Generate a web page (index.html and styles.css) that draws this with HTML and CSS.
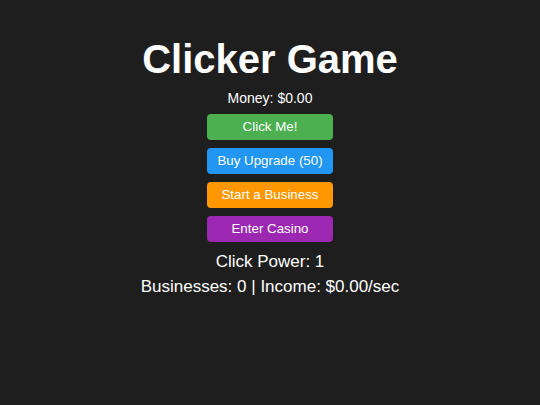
FILE: index.html
```html
<!DOCTYPE html>
<html>
<head>
<meta charset="utf-8">
<title>Clicker Game</title>
<link rel="stylesheet" href="styles.css">
</head>
<body>
<main class="game">
  <h1 class="title">Clicker Game</h1>
  <div class="money">Money: $0.00</div>
  <div class="actions">
    <button class="btn btn-click">Click Me!</button>
    <button class="btn btn-upgrade">Buy Upgrade (50)</button>
    <button class="btn btn-business">Start a Business</button>
    <button class="btn btn-casino">Enter Casino</button>
  </div>
  <div class="stats">
    <div class="stat">Click Power: 1</div>
    <div class="stat">Businesses: 0 | Income: $0.00/sec</div>
  </div>
</main>
</body>
</html>
```

FILE: styles.css
```css
html, body {
  margin: 0;
  padding: 0;
  background: #1e1e1e;
  color: #ffffff;
  font-family: "Liberation Sans", Arial, sans-serif;
}
.game {
  display: flex;
  flex-direction: column;
  align-items: center;
  padding-top: 36px;
}
.title {
  margin: 0;
  font-size: 40px;
  line-height: 46px;
  font-weight: bold;
}
.money {
  margin-top: 8px;
  font-size: 14px;
  line-height: 16px;
}
.actions {
  margin-top: 8px;
  display: flex;
  flex-direction: column;
  gap: 8px;
}
.btn {
  width: 126px;
  height: 26px;
  margin: 0;
  padding: 0;
  border: none;
  border-radius: 4px;
  color: #ffffff;
  font-family: "Liberation Sans", Arial, sans-serif;
  font-size: 13.333px;
  line-height: 26px;
  cursor: pointer;
}
.btn-click { background: #4caf50; }
.btn-upgrade { background: #2196f3; }
.btn-business { background: #ff9800; }
.btn-casino { background: #9c27b0; }
.stats {
  margin-top: 7px;
  display: flex;
  flex-direction: column;
  align-items: center;
}
.stat {
  font-size: 17px;
  line-height: 25px;
}
```
